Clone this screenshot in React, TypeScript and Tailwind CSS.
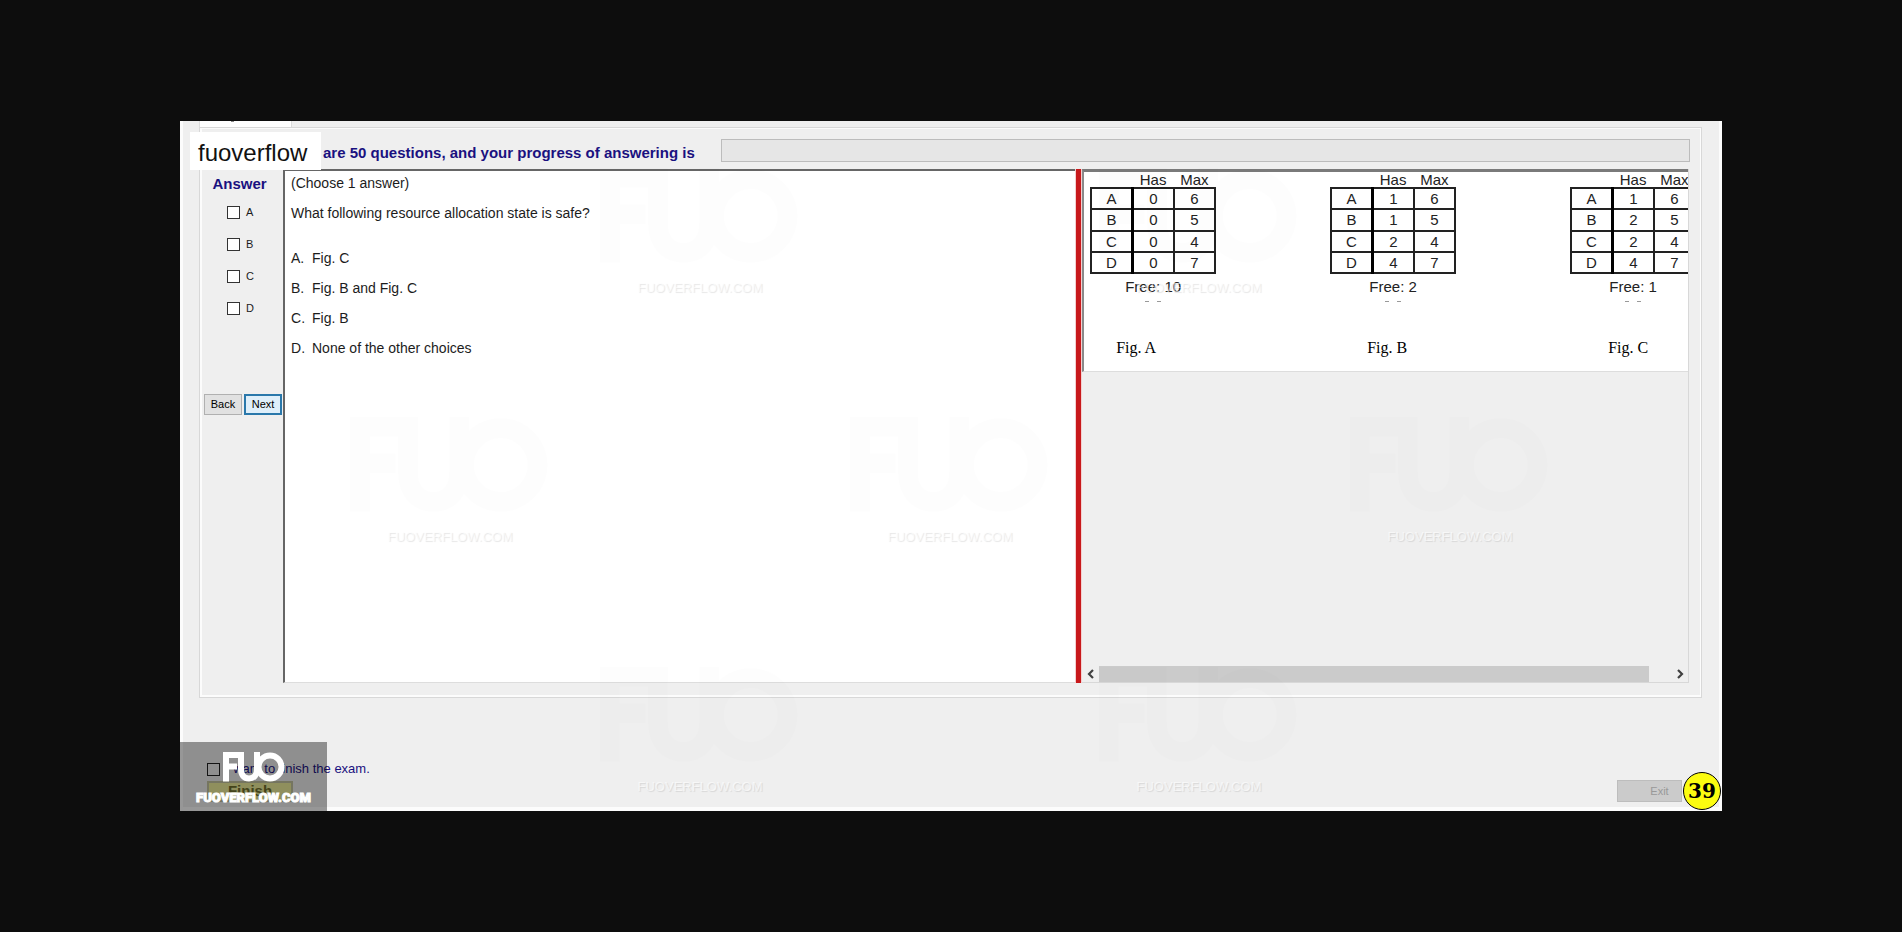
import React from "react";

type Allocation = {
  rows: [string, number, number][];
  free: number;
};

const allocations: Allocation[] = [
  { rows: [["A", 0, 6], ["B", 0, 5], ["C", 0, 4], ["D", 0, 7]], free: 10 },
  { rows: [["A", 1, 6], ["B", 1, 5], ["C", 2, 4], ["D", 4, 7]], free: 2 },
  { rows: [["A", 1, 6], ["B", 2, 5], ["C", 2, 4], ["D", 4, 7]], free: 1 },
];

const choices = [
  { key: "A", text: "Fig. C" },
  { key: "B", text: "Fig. B and Fig. C" },
  { key: "C", text: "Fig. B" },
  { key: "D", text: "None of the other choices" },
];

const watermarkSpots = [
  "left-[517px] top-[166px]",
  "left-[1016px] top-[166px]",
  "left-[267px] top-[415px]",
  "left-[767px] top-[415px]",
  "left-[1267px] top-[415px]",
  "left-[517px] top-[665px]",
  "left-[1016px] top-[665px]",
];

function FuoLogo({ className }: { className: string }) {
  return (
    <svg viewBox="0 0 62 30" fill="none" stroke="currentColor" strokeWidth="6" className={className} aria-hidden="true">
      <path d="M3 29.500V3h15M3 14.500h11" />
      <path d="M18 0v17c0 6 3 9.500 8 9.500s8-3.500 8-9.500V0" />
      <circle cx="47" cy="15" r="11.500" />
    </svg>
  );
}

function Watermark({ spot }: { spot: string }) {
  return (
    <div className={`absolute flex -translate-x-1/2 flex-col items-center ${spot}`}>
      <div className="absolute bottom-9 text-black opacity-[0.004]">
        <FuoLogo className="h-24 w-[204px]" />
      </div>
      <span className="-translate-y-1/2 text-[13px] leading-none whitespace-nowrap text-white/60 [text-shadow:1px_1px_1px_rgba(0,0,0,0.1)]">
        FUOVERFLOW.COM
      </span>
    </div>
  );
}

function AllocationTable({ rows, free }: Allocation) {
  return (
    <div className="flex w-[126px] shrink-0 flex-col items-center text-[15px] leading-none text-[#222]">
      <table className="h-[102px] w-full table-fixed border-collapse text-center">
        <thead>
          <tr className="h-[14px]">
            <td className="p-0" />
            <th scope="col" className="p-0 font-normal">Has</th>
            <th scope="col" className="p-0 font-normal">Max</th>
          </tr>
        </thead>
        <tbody className="border-2 border-[#222]">
          {rows.map(([name, has, max]) => (
            <tr key={name} className="border-t-2 border-[#222]">
              <th scope="row" className="p-0 font-normal">{name}</th>
              <td className="border-l-3 border-black p-0">{has}</td>
              <td className="border-l-2 border-[#222] p-0">{max}</td>
            </tr>
          ))}
        </tbody>
      </table>
      <p className="mt-[3px] leading-5">Free: {free}</p>
      <div className="mt-1 flex gap-2">
        <span className="h-px w-1 bg-[#999]" />
        <span className="h-px w-1 bg-[#999]" />
      </div>
    </div>
  );
}

function Chevron({ d }: { d: string }) {
  return (
    <svg viewBox="0 0 8 10" className="h-[10px] w-2" fill="none" stroke="#404040" strokeWidth="2.200" aria-hidden="true">
      <path d={d} />
    </svg>
  );
}

export default function App() {
  return (
    <div className="flex min-h-screen flex-col bg-[#0d0d0d] px-[180px] py-[121px] font-['Liberation_Sans',Arial,sans-serif] text-[#1c1c1c]">
      <main className="relative flex flex-1 flex-col border-r-3 border-b-4 border-l-3 border-[#fcfcfc] bg-[#efefef]">
        <div className="flex h-[6px] pl-4">
          <div className="w-[92px] border-l border-[#dcdcdc] bg-white">
            <span className="ml-[31px] block h-px w-[3px] bg-[#888]" />
          </div>
          <div className="mr-[17px] flex-1 border-l border-[#dcdcdc]" />
        </div>

        <section className="mr-[17px] ml-4 flex flex-1 flex-col border border-[#d8d8d8] pr-3 pb-[14px] shadow-[inset_2px_0_0_#fcfcfc,inset_0_-2px_0_#fcfcfc,inset_0_1px_0_#fcfcfc,inset_-1px_0_0_#fcfcfc]">
          <header className="flex h-[41px] items-center pt-1">
            <div className="relative -ml-[10px] flex h-[38px] w-[131px] shrink-0 items-center bg-white pt-1 pl-2 text-[24px] leading-none text-[#111]">
              fuoverflow
            </div>
            <h1 className="ml-[2px] w-[398px] shrink-0 pt-1 text-[15px] leading-5 font-bold whitespace-nowrap text-[#1a1180]">
              are 50 questions, and your progress of answering is
            </h1>
            <div
              role="progressbar"
              aria-label="Answering progress"
              aria-valuenow={0}
              className="-mr-px h-[23px] flex-1 border border-[#bcbcbc] bg-[#e6e6e6]"
            />
          </header>

          <div className="flex flex-1">
            <aside className="flex w-[83px] shrink-0 flex-col">
              <h2 className="mt-[5px] pr-1 text-center text-[15px] leading-5 font-bold text-[#1a1180]">Answer</h2>
              <div className="mt-[9px] flex flex-col gap-[14px] pl-[27px]">
                {choices.map(({ key }) => (
                  <label key={key} className="flex h-[18px] items-center gap-[6px] text-[11px]">
                    <input type="checkbox" className="size-[13px] appearance-none border border-[#333] bg-white checked:bg-[#333]" />
                    {key}
                  </label>
                ))}
              </div>
              <div className="mt-[77px] flex gap-[2px] pl-1 text-[11px] text-black">
                <button type="button" className="h-[21px] w-[38px] border border-[#b0b0b0] bg-[#e1e1e1]">Back</button>
                <button type="button" className="h-[21px] w-[38px] border-2 border-[#2a78ab] bg-[#dfeffa]">Next</button>
              </div>
            </aside>

            <article className="min-w-0 flex-[783] border-t-2 border-b border-l-2 border-t-[#666] border-b-[#ddd] border-l-[#666] bg-white pt-[2px] pl-[6px] text-[14px] leading-5">
              <p>(Choose 1 answer)</p>
              <p className="mt-[10px]">What following resource allocation state is safe?</p>
              <ol className="mt-[25px] flex flex-col gap-[10px]">
                {choices.map(({ key, text }) => (
                  <li key={key} className="flex">
                    <span className="w-[21px]">{key}.</span>
                    {text}
                  </li>
                ))}
              </ol>
            </article>

            <div className="w-[7px] shrink-0 border-r border-l border-[#f3d0d0] bg-[#c8191b]" />

            <section className="flex min-w-0 flex-[605] flex-col border-r border-b border-[#d8d8d8]">
              <div className="h-[203px] overflow-hidden border-t-3 border-b border-l-2 border-t-[#7a7a7a] border-b-[#ddd] border-l-[#8a8a8a] bg-white pl-[6px]">
                <div className="flex gap-[114px]">
                  {allocations.map((allocation, i) => (
                    <AllocationTable key={i} {...allocation} />
                  ))}
                </div>
                <div className="mt-[34px] flex pl-[26px] font-['Liberation_Serif','Times_New_Roman',serif] text-[16px] leading-6 text-black">
                  <span className="w-[251px] shrink-0">Fig. A</span>
                  <span className="w-[241px] shrink-0">Fig. B</span>
                  <span className="shrink-0">Fig. C</span>
                </div>
              </div>
              <div className="flex-1" />
              <div className="flex h-4 items-stretch">
                <button type="button" aria-label="Scroll left" className="flex w-[17px] items-center justify-center">
                  <Chevron d="M6 1L2 5l4 4" />
                </button>
                <div className="mr-[23px] flex-1 bg-[#cbcbcb]" />
                <button type="button" aria-label="Scroll right" className="flex w-4 items-center justify-center">
                  <Chevron d="M2 1l4 4-4 4" />
                </button>
              </div>
            </section>
          </div>
        </section>

        <footer className="flex h-[109px] items-end justify-between pb-[5px] pl-6">
          <div className="flex flex-col items-start">
            <label className="flex h-5 items-center gap-[6px] text-[13px] leading-5 text-[#1a1180]">
              <input type="checkbox" className="size-[13px] appearance-none border border-[#222] checked:bg-[#222]" />
              I want to finish the exam.
            </label>
            <button type="button" className="mt-[2px] flex h-[21px] w-[86px] justify-center border-2 border-[#c4c4a0] bg-[#eeee9c] text-[15px] leading-4 font-bold text-[#70702c]">
              Finish
            </button>
          </div>
          <button type="button" disabled className="mr-[37px] h-[22px] w-[65px] border border-[#bdbdbd] bg-[#cbcbcb] pl-5 text-[11px] text-[#999]">
            Exit
          </button>
        </footer>

        <div className="pointer-events-none absolute inset-0">
          {watermarkSpots.map((spot) => (
            <Watermark key={spot} spot={spot} />
          ))}
        </div>

        <div className="pointer-events-none absolute -bottom-1 -left-[3px] flex h-[69px] w-[147px] flex-col items-center bg-black/40 pt-[10px] text-white">
          <FuoLogo className="h-[30px] w-[62px]" />
          <span className="mt-[6px] font-[Roboto,'Liberation_Sans',sans-serif] text-[13px] leading-5 font-black [-webkit-text-stroke:1px_white]">
            FUOVERFLOW.COM
          </span>
        </div>

        <div className="absolute -right-[2px] -bottom-[3px] flex size-[38px] items-center justify-center rounded-full border border-black bg-[#fcfc10] font-['DejaVu_Serif',serif] text-[20px] leading-none font-bold text-black">
          39
        </div>
      </main>
    </div>
  );
}
